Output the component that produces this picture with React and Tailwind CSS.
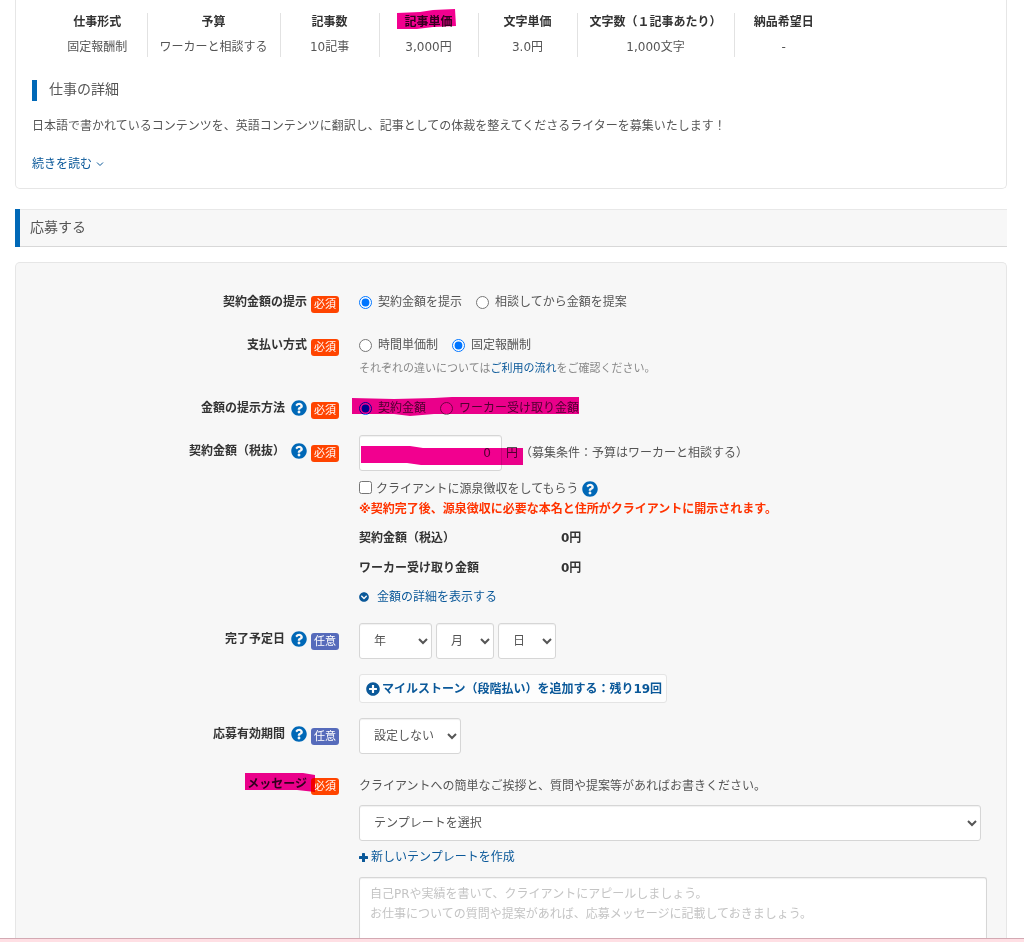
import { FaChevronCircleDown, FaPlusCircle, FaQuestionCircle } from "react-icons/fa";

const SUMMARY = [
  { title: "仕事形式", value: "固定報酬制" },
  { title: "予算", value: "ワーカーと相談する" },
  { title: "記事数", value: "10記事" },
  { title: "記事単価", value: "3,000円", marked: true },
  { title: "文字単価", value: "3.0円" },
  { title: "文字数（１記事あたり）", value: "1,000文字" },
  { title: "納品希望日", value: "-" },
];

const FIELD =
  "h-9 rounded-[3px] border border-[#d6d6d6] bg-white text-xs text-[#555] shadow-[inset_0_1px_1px_rgba(0,0,0,0.06)]";

// Pen stroke laid over text; multiplies so that the text stays readable.
function Marker({ className, width, height, points }) {
  return (
    <svg
      aria-hidden="true"
      className={`pointer-events-none absolute z-10 mix-blend-multiply ${className}`}
      width={width}
      height={height}
      viewBox={`0 0 ${width} ${height}`}
    >
      <polygon points={points} fill="#f2008f" />
    </svg>
  );
}

function Badge({ required }) {
  return (
    <span
      className={`relative top-0.5 h-[17px] w-7 shrink-0 rounded-[3px] text-center text-[11px] leading-[17px] font-normal text-white ${
        required ? "bg-[#ff4400]" : "bg-[#566bbb]"
      }`}
    >
      {required ? "必須" : "任意"}
    </span>
  );
}

function Help() {
  return (
    <button type="button" aria-label="ヘルプ" className="shrink-0 text-[#0068b7]">
      <FaQuestionCircle className="size-4" />
    </button>
  );
}

function Row({ label, htmlFor, help, required, mark, labelClass = "", className = "", children }) {
  const Text = htmlFor ? "label" : "span";
  return (
    <div className={`flex items-start gap-5 ${className}`}>
      <div className={`w-[323px] shrink-0 ${labelClass}`}>
        <div className="relative flex h-5 items-center justify-end gap-1 font-bold text-[#333]">
          <Text htmlFor={htmlFor} className={help ? "mr-0.5" : ""}>
            {label}
          </Text>
          {help && <Help />}
          <Badge required={required} />
          {mark}
        </div>
      </div>
      <div className="min-w-0 flex-1">{children}</div>
    </div>
  );
}

function Radios({ name, options, selected }) {
  return (
    <div role="radiogroup" className="flex h-5 items-center gap-3.5">
      {options.map((option, i) => (
        <label key={option} className="flex items-center gap-1.5">
          <input type="radio" name={name} defaultChecked={i === selected} className="size-[13px]" />
          {option}
        </label>
      ))}
    </div>
  );
}

export default function App() {
  return (
    <div className="bg-white pl-[15px] font-['DejaVu_Sans','Noto_Sans_CJK_JP',sans-serif] text-xs leading-5 text-[#555]">
      <div className="pr-[17px]">
        <section className="rounded-b-[5px] border border-t-0 border-[#e6e6e6] px-4 pt-[13px] pb-3.5">
          <table className="ml-4 border-collapse text-center">
            <thead>
              <tr>
                {SUMMARY.map(({ title, marked }) => (
                  <th
                    key={title}
                    scope="col"
                    className="min-w-[99px] border-r border-[#e2e2e2] px-3 leading-[18px] whitespace-nowrap text-[#333] last:border-r-0"
                  >
                    <span className="relative">
                      {title}
                      {marked && (
                        <Marker
                          className="-top-1.5 -left-2"
                          width={59}
                          height={21}
                          points="0,4 23,3 36,1 58,0 59,17 36,18 20,20 0,20"
                        />
                      )}
                    </span>
                  </th>
                ))}
              </tr>
            </thead>
            <tbody>
              <tr>
                {SUMMARY.map(({ title, value }) => (
                  <td
                    key={title}
                    className="border-r border-[#e2e2e2] px-3 pt-1.5 whitespace-nowrap last:border-r-0"
                  >
                    {value}
                  </td>
                ))}
              </tr>
            </tbody>
          </table>
          <h2 className="mt-[23px] flex h-[21px] items-center border-l-[5px] border-[#0068b7] pb-1 pl-3 text-sm">
            仕事の詳細
          </h2>
          <p className="mt-[15px]">
            日本語で書かれているコンテンツを、英語コンテンツに翻訳し、記事としての体裁を整えてくださるライターを募集いたします！
          </p>
          <a href="#more" className="mt-[18px] flex items-center gap-1 text-[#0a5899]">
            続きを読む
            <svg width="8" height="6" viewBox="0 0 8 6" fill="none" stroke="currentColor">
              <path d="M1 1.5 4 4.5 7 1.5" />
            </svg>
          </a>
        </section>

        <h2 className="mt-5 flex h-[38px] items-center border-y border-t-[#e8e8e8] border-b-[#d8d8d8] bg-[#f7f7f7] text-sm">
          <span className="-my-px self-stretch border-l-[5px] border-[#0068b7]" />
          <span className="pb-0.5 pl-2.5">応募する</span>
        </h2>

        <form
          className="mt-[15px] rounded-t-[5px] border border-b-0 border-[#e6e6e6] bg-[#f7f7f7] pt-[29px] pr-[19px]"
          onSubmit={(e) => e.preventDefault()}
        >
          <Row label="契約金額の提示" required>
            <Radios name="offer" options={["契約金額を提示", "相談してから金額を提案"]} selected={0} />
          </Row>

          <Row label="支払い方式" required className="mt-[23px]">
            <Radios name="payment" options={["時間単価制", "固定報酬制"]} selected={1} />
            <p className="mt-1 text-[11px] text-[#888]">
              それぞれの違いについては
              <a href="#flow" className="text-[#0a5899]">
                ご利用の流れ
              </a>
              をご確認ください。
            </p>
          </Row>

          <Row label="金額の提示方法" help required className="mt-[19px]">
            <div className="relative">
              <Radios name="method" options={["契約金額", "ワーカー受け取り金額"]} selected={0} />
              <Marker
                className="-top-px -left-[7px]"
                width={227}
                height={19}
                points="0,1 42,2 82,1 100,0 227,0 227,17 82,17 58,19 42,17 0,17"
              />
            </div>
          </Row>

          <Row
            label="契約金額（税抜）"
            htmlFor="amount"
            help
            required
            className="mt-[17px]"
            labelClass="pt-1.5"
          >
            <div className="relative flex items-center">
              <input
                id="amount"
                type="text"
                inputMode="numeric"
                defaultValue="0"
                className={`${FIELD} w-[143px] px-2.5 text-right`}
              />
              <span className="ml-1">円</span>
              <span className="ml-0.5">（募集条件：予算はワーカーと相談する）</span>
              <Marker
                className="top-[11px] left-0.5"
                width={162}
                height={19}
                points="0,0 49,0 62,2 162,2 162,19 60,19 46,17 0,17"
              />
            </div>
            <div className="mt-2 flex h-5 items-center gap-[3px]">
              <label className="flex items-center gap-1">
                <input type="checkbox" className="mb-1 size-[13px]" />
                クライアントに源泉徴収をしてもらう
              </label>
              <Help />
            </div>
            <p className="font-bold text-[#ff3300]">
              ※契約完了後、源泉徴収に必要な本名と住所がクライアントに開示されます。
            </p>
            <dl className="mt-[9px] grid grid-cols-[202px_1fr] gap-y-2.5 font-bold text-[#333]">
              <dt>契約金額（税込）</dt>
              <dd>0円</dd>
              <dt>ワーカー受け取り金額</dt>
              <dd>0円</dd>
            </dl>
            <a href="#detail" className="mt-[9px] flex items-center gap-2 text-[#0a5899]">
              <FaChevronCircleDown className="size-2.5" />
              金額の詳細を表示する
            </a>
          </Row>

          <Row label="完了予定日" htmlFor="year" help className="mt-4" labelClass="pt-1.5">
            <div className="flex gap-1">
              <select id="year" className={`${FIELD} w-[73px] pr-0.5 pl-2.5`}>
                <option>年</option>
              </select>
              <select aria-label="月" className={`${FIELD} w-[58px] pr-0.5 pl-2.5`}>
                <option>月</option>
              </select>
              <select aria-label="日" className={`${FIELD} w-[58px] pr-0.5 pl-2.5`}>
                <option>日</option>
              </select>
            </div>
            <button
              type="button"
              className="mt-[15px] flex h-[29px] items-center gap-0.5 rounded-[3px] border border-[#e4e4e4] bg-[#fdfdfd] pr-1 pl-1.5 font-bold text-[#0a5899]"
            >
              <FaPlusCircle className="size-3.5" />
              マイルストーン（段階払い）を追加する：残り19回
            </button>
          </Row>

          <Row label="応募有効期間" htmlFor="period" help className="mt-[15px]" labelClass="pt-1.5">
            <select id="period" className={`${FIELD} block w-[102px] pr-0.5 pl-2.5`}>
              <option>設定しない</option>
            </select>
          </Row>

          <Row
            label="メッセージ"
            htmlFor="message"
            required
            className="mt-[22px]"
            labelClass="-mt-0.5"
            mark={
              <Marker
                className="-top-px right-6"
                width={70}
                height={19}
                points="0,0 58,0 70,2 70,19 52,17 0,17"
              />
            }
          >
            <p>クライアントへの簡単なご挨拶と、質問や提案等があればお書きください。</p>
            <div className="pr-1.5">
              <select
                aria-label="テンプレート"
                className={`${FIELD} mt-[9px] block w-full pr-0.5 pl-2.5`}
              >
                <option>テンプレートを選択</option>
              </select>
            </div>
            <a href="#template" className="mt-1.5 flex items-center gap-[3px] text-[#0a5899]">
              <svg width="9" height="9" viewBox="0 0 9 9" fill="currentColor">
                <rect x="3" y="0" width="3" height="9" rx="0.6" />
                <rect x="0" y="3" width="9" height="3" rx="0.6" />
              </svg>
              新しいテンプレートを作成
            </a>
            <textarea
              id="message"
              placeholder={
                "自己PRや実績を書いて、クライアントにアピールしましょう。\nお仕事についての質問や提案があれば、応募メッセージに記載しておきましょう。"
              }
              className="mt-2.5 block h-[61px] w-full resize-none rounded-t-[3px] border border-b-0 border-[#d6d6d6] bg-white px-2.5 pt-1.5 leading-5 shadow-[inset_0_1px_1px_rgba(0,0,0,0.06)] placeholder:text-[#c4c4c4]"
            />
          </Row>
        </form>
      </div>
      <div className="-ml-[15px] h-1 border-t border-[#d3a9b3] bg-[#ffdfe4]" />
    </div>
  );
}
